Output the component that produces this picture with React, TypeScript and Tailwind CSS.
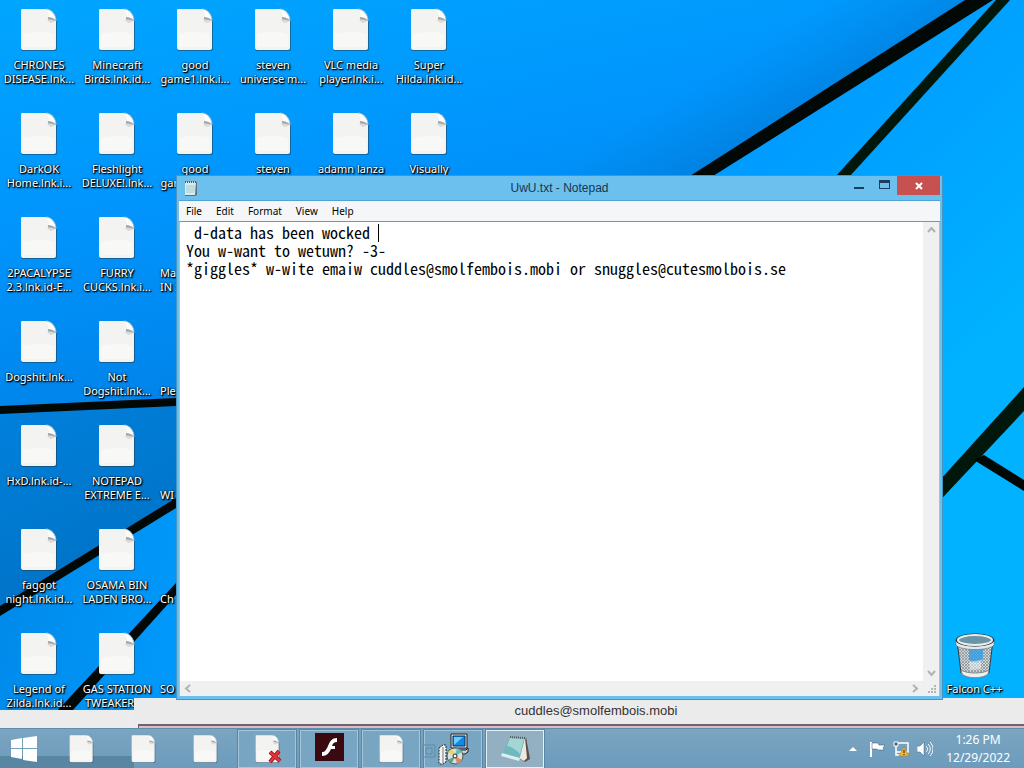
import type { ReactNode } from "react";

type Shortcut = {
  lines: string[];
  clipped?: boolean;
};

// Laid out column by column, seven slots in each.
const shortcuts: Shortcut[] = [
  { lines: ["CHRONES", "DISEASE.lnk..."] },
  { lines: ["DarkOK", "Home.lnk.i..."] },
  { lines: ["2PACALYPSE", "2.3.lnk.id-E..."] },
  { lines: ["Dogshit.lnk..."] },
  { lines: ["HxD.lnk.id-..."] },
  { lines: ["faggot", "night.lnk.id..."] },
  { lines: ["Legend of", "Zilda.lnk.id..."] },
  { lines: ["Minecraft", "Birds.lnk.id..."] },
  { lines: ["Fleshlight", "DELUXE!.lnk..."] },
  { lines: ["FURRY", "CUCKS.lnk.i..."] },
  { lines: ["Not", "Dogshit.lnk..."] },
  { lines: ["NOTEPAD", "EXTREME E..."] },
  { lines: ["OSAMA BIN", "LADEN BRO..."] },
  { lines: ["GAS STATION", "TWEAKERS..."] },
  { lines: ["good", "game1.lnk.i..."] },
  { lines: ["good", "game1.lnk.i..."] },
  { lines: ["Ma", "IN S"], clipped: true },
  { lines: ["\u00a0", "Ple"], clipped: true },
  { lines: ["\u00a0", "WI"], clipped: true },
  { lines: ["\u00a0", "Ch"], clipped: true },
  { lines: ["SO"], clipped: true },
];

const topRow: Shortcut[] = [
  { lines: ["steven", "universe m..."] },
  { lines: ["steven"] },
  { lines: ["VLC media", "player.lnk.i..."] },
  { lines: ["adamn lanza"] },
  { lines: ["Super", "Hilda.lnk.id..."] },
  { lines: ["Visually"] },
];

const menuItems = ["File", "Edit", "Format", "View", "Help"] as const;

const note = ` d-data has been wocked 
You w-want to wetuwn? -3-
*giggles* w-wite emaiw cuddles@smolfembois.mobi or snuggles@cutesmolbois.se`;

function Wallpaper() {
  return (
    <svg
      className="absolute inset-0 h-full w-full"
      viewBox="0 0 1024 768"
      preserveAspectRatio="none"
      aria-hidden="true"
    >
      <defs>
        <linearGradient id="sky" gradientUnits="userSpaceOnUse" x1="150" y1="-60" x2="250" y2="440">
          <stop offset="0" stopColor="#00a8ff" />
          <stop offset="0.5" stopColor="#0095fd" />
          <stop offset="1" stopColor="#007fe4" />
        </linearGradient>
        <linearGradient id="shade" gradientUnits="userSpaceOnUse" x1="780" y1="30" x2="838" y2="122">
          <stop offset="0" stopColor="#0078d0" stopOpacity="0" />
          <stop offset="1" stopColor="#0070c4" stopOpacity="0.6" />
        </linearGradient>
        <linearGradient id="right" gradientUnits="userSpaceOnUse" x1="800" y1="120" x2="1000" y2="330">
          <stop offset="0" stopColor="#009cff" />
          <stop offset="1" stopColor="#00b2ff" />
        </linearGradient>
        <linearGradient id="wedge" gradientUnits="userSpaceOnUse" x1="0" y1="410" x2="80" y2="580">
          <stop offset="0" stopColor="#0080dc" />
          <stop offset="1" stopColor="#0074c8" />
        </linearGradient>
        <linearGradient id="low" gradientUnits="userSpaceOnUse" x1="0" y1="600" x2="176" y2="640">
          <stop offset="0" stopColor="#008aea" />
          <stop offset="1" stopColor="#0099fb" />
        </linearGradient>
      </defs>
      <rect width="1024" height="768" fill="url(#sky)" />
      <polygon points="600,0 980,0 700,176 480,176" fill="url(#shade)" />
      <polygon points="980,0 1024,0 1024,768 600,768 600,235" fill="url(#right)" />
      <polygon points="0,408 176,403 176,504 0,612" fill="url(#wedge)" />
      <polygon points="0,610 176,504 176,768 0,768" fill="url(#low)" />
      <g fill="#020805">
        <polygon points="0,406 176,398 176,406 0,414" />
        <polygon points="0,606 176,498 176,508 0,616" />
        <polygon points="58,710 176,583 176,595 73,710" />
        <polygon points="690,176 713,176 993,0 965,0" />
        <polygon points="836,176 850,176 1010,0 996,0" fill="#02170c" />
        <polygon points="930,491 1024,387 1024,411 930,511" fill="#02170c" />
        <polygon points="974,460 984,455 1024,480 1024,491" />
      </g>
    </svg>
  );
}

function FileIcon({ className }: { className: string }) {
  return (
    <svg className={className} viewBox="0 0 38 44" aria-hidden="true">
      <path d="M2 3h26c5 2 8 6 9 11v27c0 1-1 2-2 2H3c-1 0-2-1-2-2z" fill="#1f3342" opacity="0.5" />
      <path d="M1 2c0-1 1-1 2-1h23c5 0 10 5 10 12v27c0 1-1 2-2 2H3c-1 0-2-1-2-2z" fill="#f3f3f1" />
      <path d="M3 26c12-3 22-3 31 0v13H3z" fill="#fff" opacity="0.4" />
      <path d="M26 1c2 2 3 5 3 9 3-1 6 0 7 2 0-6-5-11-10-11z" fill="#fdfdfd" />
      <path d="M26 1c5 0 10 5 10 12" fill="none" stroke="#8fbcd8" />
      <path d="M28 9c3 0 6 1 8 4-3-1-6-1-8-1z" fill="#a4a8a9" />
      <path d="M27 12c3-1 6 0 8 2l-5 1z" fill="#d9dada" />
    </svg>
  );
}

function DesktopIcon({ item }: { item: Shortcut }) {
  return (
    <button className="flex h-[104px] w-[78px] flex-col items-center overflow-hidden pt-[8px]">
      <FileIcon className="h-[44px] w-[38px] shrink-0" />
      <span
        className={
          item.clipped
            ? "mt-[6px] w-full pl-1 text-left text-[11px] leading-[14px] whitespace-nowrap text-white [text-shadow:1px_1px_2px_#000,1px_1px_1px_#000,0_0_2px_#000]"
            : "mt-[6px] w-full text-center text-[11px] leading-[14px] whitespace-nowrap text-white [text-shadow:1px_1px_2px_#000,1px_1px_1px_#000,0_0_2px_#000]"
        }
      >
        {item.lines.map((line) => (
          <span key={line} className="block">
            {line}
          </span>
        ))}
      </span>
    </button>
  );
}

function RecycleBin() {
  return (
    <button className="absolute right-0 bottom-[72px] flex w-[98px] flex-col items-center text-white">
      <svg className="mb-[2px] h-[48px] w-[42px]" viewBox="0 0 42 48" aria-hidden="true">
        <defs>
          <pattern id="mesh" width="3" height="3" patternUnits="userSpaceOnUse">
            <rect width="3" height="3" fill="#d2d6d8" />
            <path d="M0 0l3 3M3 0L0 3" stroke="#7f8a90" strokeWidth="0.7" />
          </pattern>
        </defs>
        <path d="M3 8l4 33c4 6 24 6 28 0l4-33z" fill="url(#mesh)" stroke="#333d42" />
        <path d="M15 17h14v10l-6 4-8-3z" fill="#2a9bea" opacity="0.75" />
        <path d="M15 30l12-2v9l-11 1z" fill="#f4f7f8" opacity="0.5" />
        <path d="M7 38l1 4c5 5 21 5 26 0l1-4c-6 4-22 4-28 0z" fill="#eef0f0" stroke="#81898d" />
        <path d="M2 8c0 8 38 8 38 0v5c-4 6-34 6-38 0z" fill="#e6e9ea" stroke="#4f595e" strokeWidth="0.5" />
        <ellipse cx="21" cy="8" rx="19" ry="6" fill="#67848f" stroke="#20282c" />
        <ellipse cx="21" cy="8" rx="17" ry="5" fill="#6a95a8" stroke="#e9edee" strokeWidth="2" />
      </svg>
      <span className="mr-px text-[11px] leading-[14px] [text-shadow:1px_1px_2px_#000,1px_1px_1px_#000,0_0_2px_#000]">
        Falcon C++
      </span>
    </button>
  );
}

function Chevron({ d }: { d: string }) {
  return (
    <svg className="h-[9px] w-[9px]" viewBox="0 0 9 9" aria-hidden="true">
      <path d={d} fill="none" stroke="#b2b2b2" strokeWidth="2" />
    </svg>
  );
}

function Notepad() {
  return (
    <section className="absolute top-[175px] right-[81px] bottom-[68px] left-[176px] flex flex-col border border-[#4a94c4] bg-[#6cc0ee] px-[2px] pb-[3px]">
      <header className="flex h-[24px] shrink-0 items-start text-[#17364f]">
        <svg className="mt-[4px] ml-[5px] h-[16px] w-[14px]" viewBox="0 0 14 16" aria-hidden="true">
          <path d="M2 2h11v13l-2 1H1z" fill="#5b7078" />
          <path d="M1 2h11l-1 13H1z" fill="#d9ecec" />
          <path d="M2 6h9M2 8h9M2 10h9M2 12h8" stroke="#a6cccb" />
          <path d="M1 2h11" stroke="#4f6268" strokeWidth="2" strokeDasharray="1 1" />
        </svg>
        <h1 className="flex-1 pl-[74px] text-center font-['Liberation_Sans',Arial,sans-serif] text-[12px] leading-[24px]">
          UwU.txt - Notepad
        </h1>
        <button aria-label="Minimize" className="flex h-[19px] w-[24px] items-center justify-center">
          <span className="mt-[5px] h-[2px] w-[10px] bg-[#1d3b63]" />
        </button>
        <button aria-label="Maximize" className="flex h-[19px] w-[26px] items-center justify-center">
          <span className="mb-[2px] h-[9px] w-[11px] border border-t-[3px] border-[#1d3b63]" />
        </button>
        <button aria-label="Close" className="flex h-[19px] w-[43px] items-center justify-center bg-[#c75050]">
          <svg className="h-[8px] w-[8px]" viewBox="0 0 8 8" aria-hidden="true">
            <path d="M1 1l6 6M7 1L1 7" stroke="#fff" strokeWidth="2" />
          </svg>
        </button>
      </header>

      <nav className="flex h-[22px] shrink-0 items-center gap-[14px] border-t border-b border-[#4fa2d2] bg-[#f5f6f7] px-[7px] text-[10px] text-black">
        {menuItems.map((item) => (
          <button key={item}>{item}</button>
        ))}
      </nav>

      <div className="relative grid min-h-0 flex-1 grid-cols-[1fr_16px] grid-rows-[1fr_15px] border-x border-[#8ccbee] bg-white">
        <textarea
          aria-label="Text editor"
          spellCheck={false}
          wrap="off"
          defaultValue={note}
          className="resize-none overflow-hidden pt-[1px] pl-[6px] font-['Noto_Sans_Mono_CJK_SC','Liberation_Mono',monospace] text-[16px] leading-[18px] text-black outline-none"
        />
        <span className="absolute top-[2px] left-[198px] h-[18px] w-px bg-black" />
        <div className="flex flex-col items-center justify-between bg-[#f0f0f0] py-[4px]">
          <Chevron d="M1 6l3.5-4L8 6" />
          <Chevron d="M1 3l3.5 4L8 3" />
        </div>
        <div className="flex items-center justify-between bg-[#f0f0f0] px-[4px]">
          <Chevron d="M6 1L2 4.5 6 8" />
          <Chevron d="M3 1l4 3.5L3 8" />
        </div>
        <div className="flex items-end justify-end bg-[#f0f0f0] p-[2px]">
          <svg className="h-[9px] w-[9px]" viewBox="0 0 9 9" fill="#b5b5b5" aria-hidden="true">
            <path d="M6 0h2v2H6zM3 3h2v2H3zM6 3h2v2H6zM0 6h2v2H0zM3 6h2v2H3zM6 6h2v2H6z" />
          </svg>
        </div>
      </div>
    </section>
  );
}

// Window that has slid almost entirely behind the taskbar.
function BackWindow() {
  return (
    <section className="absolute right-0 bottom-[40px] left-0 flex items-end">
      <div className="h-[18px] w-[134px] shrink-0 bg-[#ececec]" />
      <div className="flex h-[30px] flex-1 flex-col bg-[#ebebeb] pl-[4px]">
        <p className="flex-1 pl-[30px] text-center font-['Liberation_Sans',Arial,sans-serif] text-[13px] leading-[26px] text-[#333]">
          cuddles@smolfembois.mobi
        </p>
        <div className="h-[4px] border-t-2 border-l border-[#6b646c] bg-[#e3b9c6]" />
      </div>
    </section>
  );
}

function TaskButton({
  label,
  open,
  active,
  children,
}: {
  label: string;
  open?: boolean;
  active?: boolean;
  children: ReactNode;
}) {
  let look = "border-transparent";
  if (open) look = "border-[#a3c6da] bg-[#78a5c2] outline outline-[#5b87a6]";
  if (active) look = "border-[#e3f0f6] bg-[#93b0c2] outline outline-[#5b87a6]";
  return (
    <button
      aria-label={label}
      className={`relative flex h-[38px] w-[58px] items-center justify-center border ${look}`}
    >
      {children}
    </button>
  );
}

function Taskbar() {
  return (
    <footer className="absolute right-0 bottom-0 left-0 flex h-[40px] items-center justify-between border-t border-[#5f8dad] bg-linear-to-b from-[#7ba5c0] to-[#6c9bbc] text-white">
      <div className="absolute bottom-0 left-0 h-[12px] w-[134px] bg-[#5886a3]" />
      <div className="relative flex items-center gap-[4px]">
        <button aria-label="Start" className="flex h-[38px] w-[48px] items-center justify-center">
          <svg className="h-[26px] w-[28px]" viewBox="0 0 28 26" fill="#fff" aria-hidden="true">
            <path d="M1 4l11-2v10H1zM13 2l14-2v12H13zM1 13h11v10L1 21zM13 13h14v13l-14-2z" />
          </svg>
        </button>
        <TaskButton label="File">
          <FileIcon className="h-[30px] w-[25px]" />
        </TaskButton>
        <TaskButton label="File">
          <FileIcon className="h-[30px] w-[25px]" />
        </TaskButton>
        <TaskButton label="File">
          <FileIcon className="h-[30px] w-[25px]" />
        </TaskButton>
        <TaskButton label="Missing file" open>
          <FileIcon className="h-[30px] w-[25px]" />
          <svg className="absolute right-[13px] bottom-[4px] h-[13px] w-[14px]" viewBox="0 0 14 13" aria-hidden="true">
            <path d="M2 2l10 9M11 1L2 12" stroke="#8f1018" strokeWidth="4" />
            <path d="M2 2l10 9M11 1L2 12" stroke="#e8323a" strokeWidth="2.4" />
          </svg>
        </TaskButton>
        <TaskButton label="Flash Player" open>
          <svg className="mb-[4px] h-[28px] w-[29px]" viewBox="0 0 29 28" aria-hidden="true">
            <path d="M0 0h29v28H0z" fill="#3b0a10" />
            <path
              d="M22 5v4c-3 0-4 1-5 4h3v3h-4c-2 4-4 7-9 7v-4c3 0 4-2 6-6 2-5 4-8 9-8z"
              fill="#fff"
            />
          </svg>
        </TaskButton>
        <TaskButton label="File" open>
          <FileIcon className="h-[30px] w-[25px]" />
        </TaskButton>
        <TaskButton label="Setup" open>
          <svg
            className="absolute top-[13px] left-[-3px] h-[14px] w-[14px]"
            viewBox="0 0 14 14"
            fill="none"
            stroke="#5d8ba8"
            aria-hidden="true"
          >
            <path d="M1 1h12v12H1zM4 4h6v6H4z" />
          </svg>
          <svg className="h-[32px] w-[32px]" viewBox="0 0 32 32" aria-hidden="true">
            <path d="M2 15l4-3h3v17l-3 2H2z" fill="#f3f3f3" stroke="#222" strokeDasharray="2 1" />
            <path d="M6 14v16" stroke="#777" />
            <path d="M12 17h17l2-2v4l-3 2H12z" fill="#cfcfcf" stroke="#222" />
            <path d="M14 1h16v14H14z" fill="#e4e4e4" stroke="#222" />
            <path d="M16 3h12v10H16z" fill="#1488e8" stroke="#07305f" />
            <path d="M17 12l9-8h-9z" fill="#68d0f8" />
            <circle cx="18" cy="23" r="8" fill="#d9dedb" stroke="#555" />
            <path d="M18 23l-7-4a8 8 0 0 1 4-3z" fill="#e8d25c" />
            <path d="M18 23l2-8a8 8 0 0 1 5 4z" fill="#5fc0ae" />
            <path d="M18 23l7 4a8 8 0 0 1-5 4z" fill="#d58a68" />
            <path d="M18 23l-3 7a8 8 0 0 1-4-3z" fill="#4fa894" />
            <circle cx="18" cy="23" r="2" fill="#fff" stroke="#222" />
          </svg>
        </TaskButton>
        <TaskButton label="Notepad" open active>
          <svg className="h-[30px] w-[32px]" viewBox="0 0 32 30" aria-hidden="true">
            <path d="M27 3l4 22-5 3-5-3z" fill="#5a5048" />
            <path d="M26 4l2 20-3 3-5-3z" fill="#eee9df" />
            <path d="M11 3l15 1-6 23-18-5z" fill="#6fb9be" />
            <path d="M11 4l14 1-4 15C15 14 10 12 8 12z" fill="#a5d5d5" />
            <path d="M2 22l18 5 1-3L3 19z" fill="#dceeed" />
            <path d="M11 3l15 1" stroke="#565c60" strokeWidth="2" strokeDasharray="1 1" />
          </svg>
        </TaskButton>
      </div>

      <div className="flex items-center pr-[14px]">
        <button aria-label="Show hidden icons" className="mr-[12px]">
          <svg className="h-[4px] w-[8px]" viewBox="0 0 8 4" fill="#fff" aria-hidden="true">
            <path d="M4 0l4 4H0z" />
          </svg>
        </button>
        <div className="flex items-center gap-[8px]">
          <svg className="h-[16px] w-[16px]" viewBox="0 0 16 16" aria-hidden="true">
            <path d="M2 1v15" stroke="#fff" strokeWidth="2" />
            <path d="M3 2h6l1 2h6l-2 3 1 2H9L8 8H3z" fill="#fff" stroke="#34566d" strokeWidth="0.5" />
          </svg>
          <svg className="h-[16px] w-[16px]" viewBox="0 0 16 16" aria-hidden="true">
            <path d="M5 2h10v9H6M3 5v6h3M3 11v3h6" fill="none" stroke="#fff" strokeWidth="1.5" />
            <path d="M1 1h4v4H1z" fill="#41657d" stroke="#fff" />
            <path d="M11 6l5 9H6z" fill="#f5b32c" stroke="#b97a08" strokeWidth="0.5" />
            <path d="M11 9v3M11 13v1" stroke="#222" />
          </svg>
          <svg className="h-[16px] w-[16px]" viewBox="0 0 16 16" aria-hidden="true">
            <path d="M0 5h3l4-4v14l-4-4H0z" fill="#fff" stroke="#41657d" strokeWidth="0.5" />
            <path d="M9 5c2 2 2 4 0 6M11 3c3 3 3 7 0 10M13 1c4 4 4 10 0 14" fill="none" stroke="#fff" />
          </svg>
        </div>
        <time className="ml-[13px] text-center text-[12px] leading-[18px]">
          1:26 PM
          <br />
          12/29/2022
        </time>
      </div>
    </footer>
  );
}

export default function App() {
  return (
    <main className="relative h-screen w-full overflow-hidden bg-[#0094fc] font-['Noto_Sans','Open_Sans',sans-serif] select-none">
      <Wallpaper />
      <div className="relative flex">
        <div className="grid grid-flow-col grid-rows-7">
          {shortcuts.map((item, index) => (
            <DesktopIcon key={index} item={item} />
          ))}
        </div>
        <div className="grid grid-flow-col grid-rows-2 self-start">
          {topRow.map((item, index) => (
            <DesktopIcon key={index} item={item} />
          ))}
        </div>
      </div>
      <RecycleBin />
      <BackWindow />
      <Notepad />
      <Taskbar />
    </main>
  );
}
